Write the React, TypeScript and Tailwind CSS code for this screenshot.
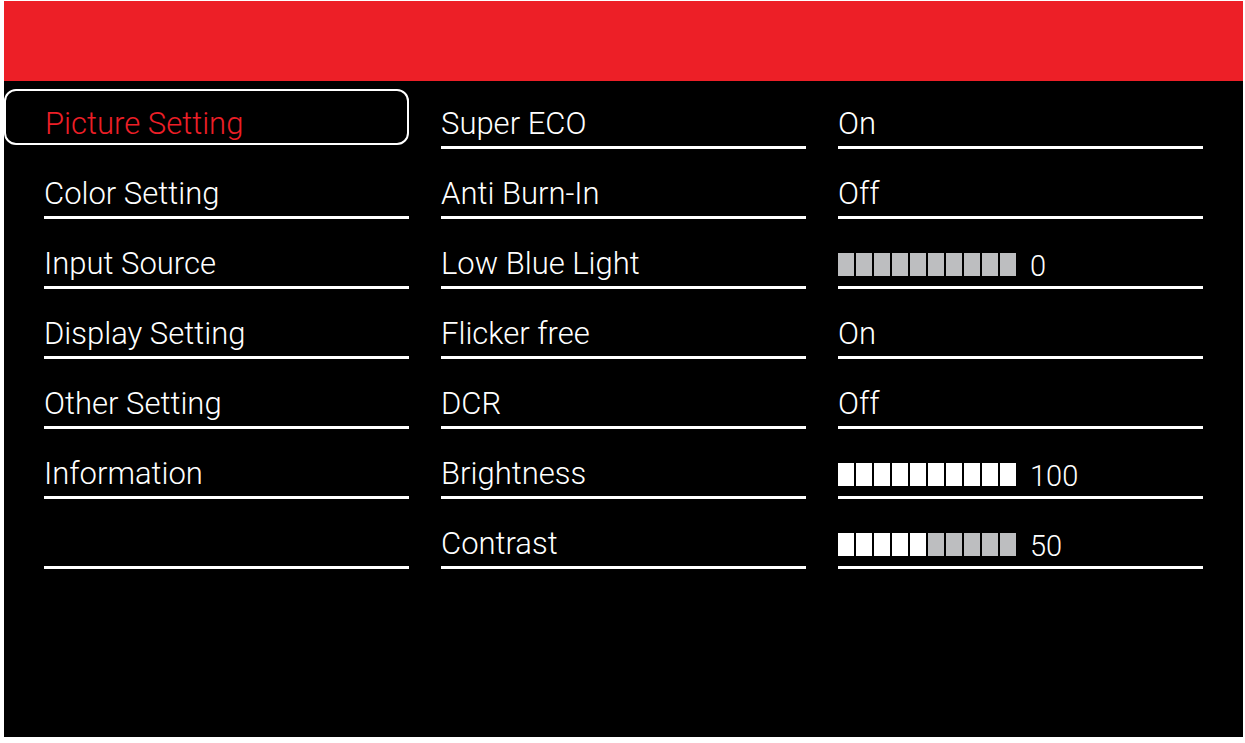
import React from "react";

const font = { fontFamily: '"Roboto", "Liberation Sans", Arial, sans-serif' };

const menu = [
  "Picture Setting",
  "Color Setting",
  "Input Source",
  "Display Setting",
  "Other Setting",
  "Information",
  "",
];

type Item = { label: string; value?: string; level?: number; num?: string };

const items: Item[] = [
  { label: "Super ECO", value: "On" },
  { label: "Anti Burn-In", value: "Off" },
  { label: "Low Blue Light", level: 0, num: "0" },
  { label: "Flicker free", value: "On" },
  { label: "DCR", value: "Off" },
  { label: "Brightness", level: 10, num: "100" },
  { label: "Contrast", level: 5, num: "50" },
];

function Bar({ level, num }: { level: number; num: string }) {
  return (
    <div className="flex items-end gap-[14px] -mb-[2px]">
      <div className="flex gap-[2px] mb-[5px]">
        {Array.from({ length: 10 }).map((_, i) => (
          <div
            key={i}
            className={
              i < level
                ? "w-[16px] h-[23px] bg-white"
                : "w-[16px] h-[23px] bg-[#bdbec0]"
            }
          />
        ))}
      </div>
      <span className="text-[29px] leading-none font-light">{num}</span>
    </div>
  );
}

function Row({ children, first }: { children: React.ReactNode; first?: boolean }) {
  return (
    <div
      className={
        (first ? "h-[68px]" : "h-[70px]") +
        " flex items-end border-b-[3px] border-white pb-[7px]"
      }
    >
      {children}
    </div>
  );
}

export default function App() {
  return (
    <div className="min-h-screen bg-white pt-[1px] pl-[4px]" style={font}>
      <div className="w-[1239px] h-[736px] bg-black flex flex-col">
        <div className="h-[80px] bg-[#ed1f27]" />
        <div className="flex gap-[32px] pl-[40px] text-white font-light">
          <div className="w-[365px] flex flex-col">
            {menu.map((m, i) =>
              i === 0 ? (
                <div key={i} className="h-[68px] flex items-start pt-[8px]">
                  <div className="-ml-[40px] w-[405px] h-[56px] border-2 border-white rounded-[12px] flex items-end pl-[39px] pb-[4px]">
                    <span className="text-[31px] leading-none text-[#ed1f27]">{m}</span>
                  </div>
                </div>
              ) : (
                <Row key={i}>
                  <span className="text-[31px] leading-none">{m}</span>
                </Row>
              )
            )}
          </div>
          <div className="w-[365px] flex flex-col">
            {items.map((it, i) => (
              <Row key={i} first={i === 0}>
                <span className="text-[31px] leading-none">{it.label}</span>
              </Row>
            ))}
          </div>
          <div className="w-[365px] flex flex-col">
            {items.map((it, i) => (
              <Row key={i} first={i === 0}>
                {it.value !== undefined ? (
                  <span className="text-[31px] leading-none">{it.value}</span>
                ) : (
                  <Bar level={it.level ?? 0} num={it.num ?? ""} />
                )}
              </Row>
            ))}
          </div>
        </div>
      </div>
    </div>
  );
}
